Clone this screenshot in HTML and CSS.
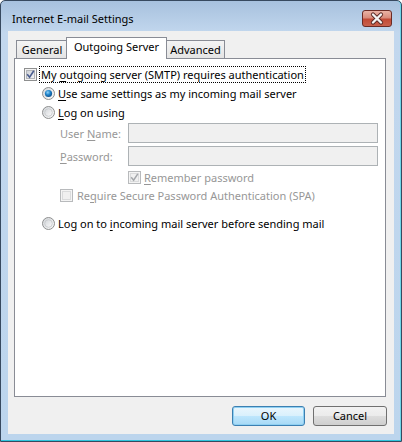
FILE: index.html
```html
<!DOCTYPE html>
<html>
<head>
<meta charset="utf-8">
<link rel="stylesheet" href="styles.css">
</head>
<body>
<div class="window">
  <div class="titlebar">
    <span class="title">Internet E-mail Settings</span>
    <div class="close">
      <svg width="28" height="15" viewBox="0 0 28 15">
        <path d="M10 3.5 L18 11.5 M18 3.5 L10 11.5" stroke="#5a2a26" stroke-width="4.2" stroke-linecap="round"/>
        <path d="M10 3.5 L18 11.5 M18 3.5 L10 11.5" stroke="#f4f4f4" stroke-width="2.4" stroke-linecap="round"/>
      </svg>
    </div>
  </div>
  <div class="client">
    <div class="tabs">
      <div class="tab general">General</div>
      <div class="tab active">Outgoing Server</div>
      <div class="tab advanced">Advanced</div>
    </div>
    <div class="panel">
      <div class="row">
        <svg class="box" width="13" height="13" viewBox="0 0 13 13">
          <defs><linearGradient id="cg" x1="0" y1="0" x2="1" y2="1"><stop offset="0" stop-color="#cbcfd5"/><stop offset="1" stop-color="#f6f6f6"/></linearGradient></defs>
          <rect x="0.5" y="0.5" width="12" height="12" fill="#f4f4f4" stroke="#8e8f8f"/>
          <rect x="2.5" y="2.5" width="8" height="8" fill="url(#cg)" stroke="#b3b5b8"/>
          <path d="M3.2 6.3 L5.6 9.2 L9.8 2.8" fill="none" stroke="#4a5d8f" stroke-width="1.6"/>
        </svg>
        <span class="label focus">My <u>o</u>utgoing server (SMTP) requires authentication</span>
      </div>
      <div class="row indent1">
        <svg class="box" width="13" height="13" viewBox="0 0 13 13">
          <defs><radialGradient id="rd" cx="0.4" cy="0.35" r="0.7"><stop offset="0" stop-color="#8fd3fb"/><stop offset="0.5" stop-color="#1d82c8"/><stop offset="1" stop-color="#0d4a87"/></radialGradient>
          <linearGradient id="rg" x1="0" y1="0" x2="1" y2="1"><stop offset="0" stop-color="#d3d6da"/><stop offset="1" stop-color="#fbfbfb"/></linearGradient></defs>
          <circle cx="6.5" cy="6.5" r="6" fill="url(#rg)" stroke="#8e8f8f"/>
          <circle cx="6.5" cy="6.5" r="3.6" fill="url(#rd)"/>
        </svg>
        <span class="rlabel"><u>U</u>se same settings as my incoming mail server</span>
      </div>
      <div class="row indent1">
        <svg class="box" width="13" height="13" viewBox="0 0 13 13">
          <circle cx="6.5" cy="6.5" r="6" fill="url(#rg)" stroke="#8e8f8f"/>
          <circle cx="6.5" cy="6.5" r="3.8" fill="url(#rg)" stroke="#c4c6c9" stroke-width="0.8"/>
        </svg>
        <span class="rlabel"><u>L</u>og on using</span>
      </div>
      <div class="field first">
        <span class="flabel">User <u>N</u>ame:</span>
        <div class="input"></div>
      </div>
      <div class="field second">
        <span class="flabel"><u>P</u>assword:</span>
        <div class="input"></div>
      </div>
      <div class="row remember">
        <svg class="box" width="13" height="13" viewBox="0 0 13 13">
          <rect x="0.5" y="0.5" width="12" height="12" fill="#f4f4f4" stroke="#b8babc"/>
          <rect x="2.5" y="2.5" width="8" height="8" fill="#f0f0f0" stroke="#dadbdc"/>
          <path d="M3.2 6.3 L5.6 9.2 L9.8 2.8" fill="none" stroke="#a4a7ab" stroke-width="1.5"/>
        </svg>
        <span class="rlabel disabled"><u>R</u>emember password</span>
      </div>
      <div class="row spa">
        <svg class="box" width="13" height="13" viewBox="0 0 13 13">
          <rect x="0.5" y="0.5" width="12" height="12" fill="#f4f4f4" stroke="#b8babc"/>
          <rect x="2.5" y="2.5" width="8" height="8" fill="#f0f0f0" stroke="#dadbdc"/>
        </svg>
        <span class="clabel disabled">Re<u>q</u>uire Secure Password Authentication (SPA)</span>
      </div>
      <div class="row indent1 last">
        <svg class="box" width="13" height="13" viewBox="0 0 13 13">
          <circle cx="6.5" cy="6.5" r="6" fill="url(#rg)" stroke="#8e8f8f"/>
          <circle cx="6.5" cy="6.5" r="3.8" fill="url(#rg)" stroke="#c4c6c9" stroke-width="0.8"/>
        </svg>
        <span class="rlabel">Log on to <u>i</u>ncoming mail server before sending mail</span>
      </div>
    </div>
    <div class="buttons">
      <button class="btn default">OK</button>
      <button class="btn">Cancel</button>
    </div>
  </div>
</div>
</body>
</html>
```

FILE: styles.css
```css
html, body {
  margin: 0;
  padding: 0;
  background: #ffffff;
}
body {
  font-family: "Noto Sans", "Open Sans", sans-serif;
  font-size: 11px;
  color: #000;
}
u {
  text-decoration: underline;
  text-underline-offset: 2px;
}
.window {
  width: 402px;
  height: 442px;
  box-sizing: border-box;
  border: 1px solid #37495f;
  border-radius: 5px 5px 0 0;
  background: linear-gradient(to bottom, #a7c1de 0, #c2d7ee 32px, #bcd5ed 100%);
  padding: 0 7px 8px 7px;
  display: flex;
  flex-direction: column;
  box-shadow: inset 0 -1px 0 #2fc4dc, inset -1px 0 0 #6fd6e8;
}
.titlebar {
  height: 30px;
  display: flex;
  align-items: flex-start;
  justify-content: space-between;
  flex: none;
}
.title {
  margin: 10px 0 0 4px;
  line-height: 16px;
  color: #000;
}
.close {
  margin: 9px 2px 0 0;
  width: 30px;
  height: 17px;
  box-sizing: border-box;
  border: 1px solid #6b2b25;
  border-radius: 3px;
  background: linear-gradient(to bottom, #eab3a6 0, #d98c7c 45%, #c24a36 55%, #c9624e 100%);
  display: flex;
  align-items: center;
  justify-content: center;
}
.close svg {
  display: block;
}
.client {
  flex: 1;
  background: #f0f0f0;
  padding: 6px 8px 8px 6px;
  display: flex;
  flex-direction: column;
}
.tabs {
  display: flex;
  align-items: flex-end;
  height: 21px;
  padding-left: 2px;
  flex: none;
}
.tab {
  height: 18px;
  box-sizing: border-box;
  border: 1px solid #898c95;
  border-bottom: 0;
  background: linear-gradient(to bottom, #f4f4f4, #e4e4e4);
  text-align: center;
  line-height: 18px;
}
.tab.general {
  width: 52px;
}
.tab.active {
  width: 101px;
  height: 22px;
  margin: 0 0 -1px -2px;
  background: #ffffff;
  position: relative;
  z-index: 1;
  line-height: 18px;
}
.tab.advanced {
  width: 59px;
  margin-left: -1px;
}
.panel {
  height: 339px;
  box-sizing: border-box;
  border: 1px solid #898c95;
  background: #ffffff;
  padding: 6px 0 0 9px;
  flex: none;
}
.row {
  display: flex;
  align-items: center;
  height: 19px;
}
.box {
  flex: none;
  display: block;
}
.label.focus {
  margin-left: 2px;
  padding: 0 1px;
  border: 1px dotted #000;
  line-height: 15px;
}
.indent1 {
  padding-left: 18px;
}
.rlabel {
  margin-left: 3px;
}
.clabel {
  margin-left: 4px;
}
.disabled {
  color: #979797;
}
.field {
  display: flex;
  align-items: center;
  padding-left: 36px;
  height: 20px;
}
.field.first {
  margin-top: 1px;
}
.field.second {
  margin-top: 3px;
}
.flabel {
  width: 68px;
  color: #979797;
}
.input {
  width: 250px;
  height: 20px;
  box-sizing: border-box;
  border: 1px solid #adb2b5;
  background: #f0f0f0;
}
.remember {
  padding-left: 104px;
  height: 18px;
  margin-top: 2px;
}
.spa {
  padding-left: 36px;
  height: 18px;
}
.last {
  margin-top: 10px;
}
.buttons {
  display: flex;
  justify-content: flex-end;
  gap: 8px;
  margin-top: 9px;
  margin-right: -1px;
}
.btn {
  font-family: "Noto Sans", "Open Sans", sans-serif;
  font-size: 11px;
  color: #000;
  height: 20px;
  box-sizing: border-box;
  padding: 0;
  border: 1px solid #707070;
  border-radius: 3px;
  background: linear-gradient(to bottom, #f2f2f2 0, #ebebeb 50%, #dddddd 50%, #cfcfcf 100%);
  width: 74px;
  line-height: 16px;
}
.btn.default {
  width: 73px;
  border-color: #3c7fb1;
  background: linear-gradient(to bottom, #eaf6fd 0, #d9f0fc 50%, #bee6fd 50%, #a7d9f5 100%);
  box-shadow: inset 0 0 0 1px #8fd0f2;
}
```
